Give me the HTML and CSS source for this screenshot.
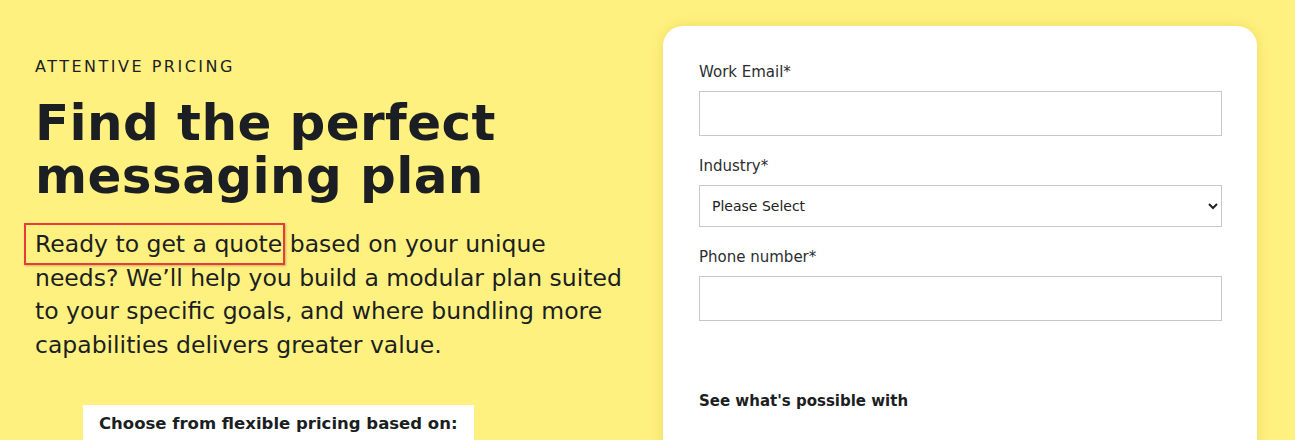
FILE: index.html
```html
<!DOCTYPE html>
<html lang="en">
<head>
    <meta charset="UTF-8">
    <meta name="viewport" content="width=device-width, initial-scale=1.0">
    <title>Attentive Pricing</title>
    <link rel="stylesheet" href="styles.css">
</head>
<body>
    <div class="pricing-hero">
        <div class="hero-copy">
            <div class="eyebrow">ATTENTIVE PRICING</div>
            <h1 class="hero-title">Find the perfect messaging plan</h1>
            <p class="hero-text"><span class="highlight">Ready to get a quote</span> based on your unique needs? We’ll help you build a modular plan suited to your specific goals, and where bundling more capabilities delivers greater value.</p>
            <div class="pricing-note">Choose from flexible pricing based on:</div>
        </div>
        <div class="quote-card">
            <form class="quote-form">
                <div class="field">
                    <label for="email">Work Email*</label>
                    <input type="email" id="email" class="text-input">
                </div>
                <div class="field">
                    <label for="industry">Industry*</label>
                    <select id="industry" class="select-input">
                        <option>Please Select</option>
                    </select>
                </div>
                <div class="field">
                    <label for="phone">Phone number*</label>
                    <input type="tel" id="phone" class="text-input">
                </div>
            </form>
            <div class="possible">See what's possible with</div>
        </div>
    </div>
</body>
</html>
```

FILE: styles.css
```css
body {
    margin: 0;
    padding: 0;
    background-color: #fff17f;
    color: #1b1e22;
    font-family: "DejaVu Sans", "Liberation Sans", sans-serif;
    overflow: hidden;
}

.pricing-hero {
    display: flex;
    align-items: flex-start;
    padding: 26px 38px 0 35px;
    height: 414px;
}

.hero-copy {
    width: 628px;
    flex-shrink: 0;
    padding-top: 32px;
}

.eyebrow {
    font-size: 16px;
    letter-spacing: 2.5px;
    line-height: 18px;
}

.hero-title {
    margin: 21px 0 0;
    width: 500px;
    font-size: 50px;
    font-weight: bold;
    line-height: 53px;
    letter-spacing: 0.4px;
}

.hero-text {
    margin: 25px 0 0;
    width: 600px;
    font-size: 23.5px;
    line-height: 33.7px;
}

.highlight {
    position: relative;
}

.highlight::before {
    content: "";
    position: absolute;
    left: -11px;
    right: -3px;
    top: -7px;
    bottom: -7px;
    border: 2px solid #ea3a3f;
    box-shadow: 1px 1px 2px rgba(0, 0, 0, 0.25);
}

.pricing-note {
    width: fit-content;
    margin: 42px 0 0 48px;
    padding: 9px 16px 10px;
    background: #fff;
    font-size: 16.5px;
    line-height: 20px;
    font-weight: bold;
}

.quote-card {
    width: 558px;
    height: 414px;
    padding: 36px 35px 0 36px;
    background: #fff;
    border-radius: 20px 20px 0 0;
    box-shadow: 0 0 12px rgba(180, 160, 40, 0.25);
}

.field {
    margin-bottom: 20px;
}

.field label {
    display: block;
    font-size: 15px;
    line-height: 20px;
    color: #2b2d30;
    margin-bottom: 9px;
}

.text-input {
    display: block;
    box-sizing: border-box;
    width: 523px;
    height: 45px;
    border: 1px solid #c8c8c8;
    border-radius: 0;
    background: #fff;
}

.select-input {
    display: block;
    box-sizing: border-box;
    width: 523px;
    height: 42px;
    padding: 0 8px;
    border: 1px solid #c8c8c8;
    border-radius: 0;
    background: #fff;
    font-family: "DejaVu Sans", sans-serif;
    font-size: 14px;
    color: #222;
}

.possible {
    margin-top: 71px;
    font-size: 15px;
    font-weight: bold;
    color: #1b1e22;
}
```
